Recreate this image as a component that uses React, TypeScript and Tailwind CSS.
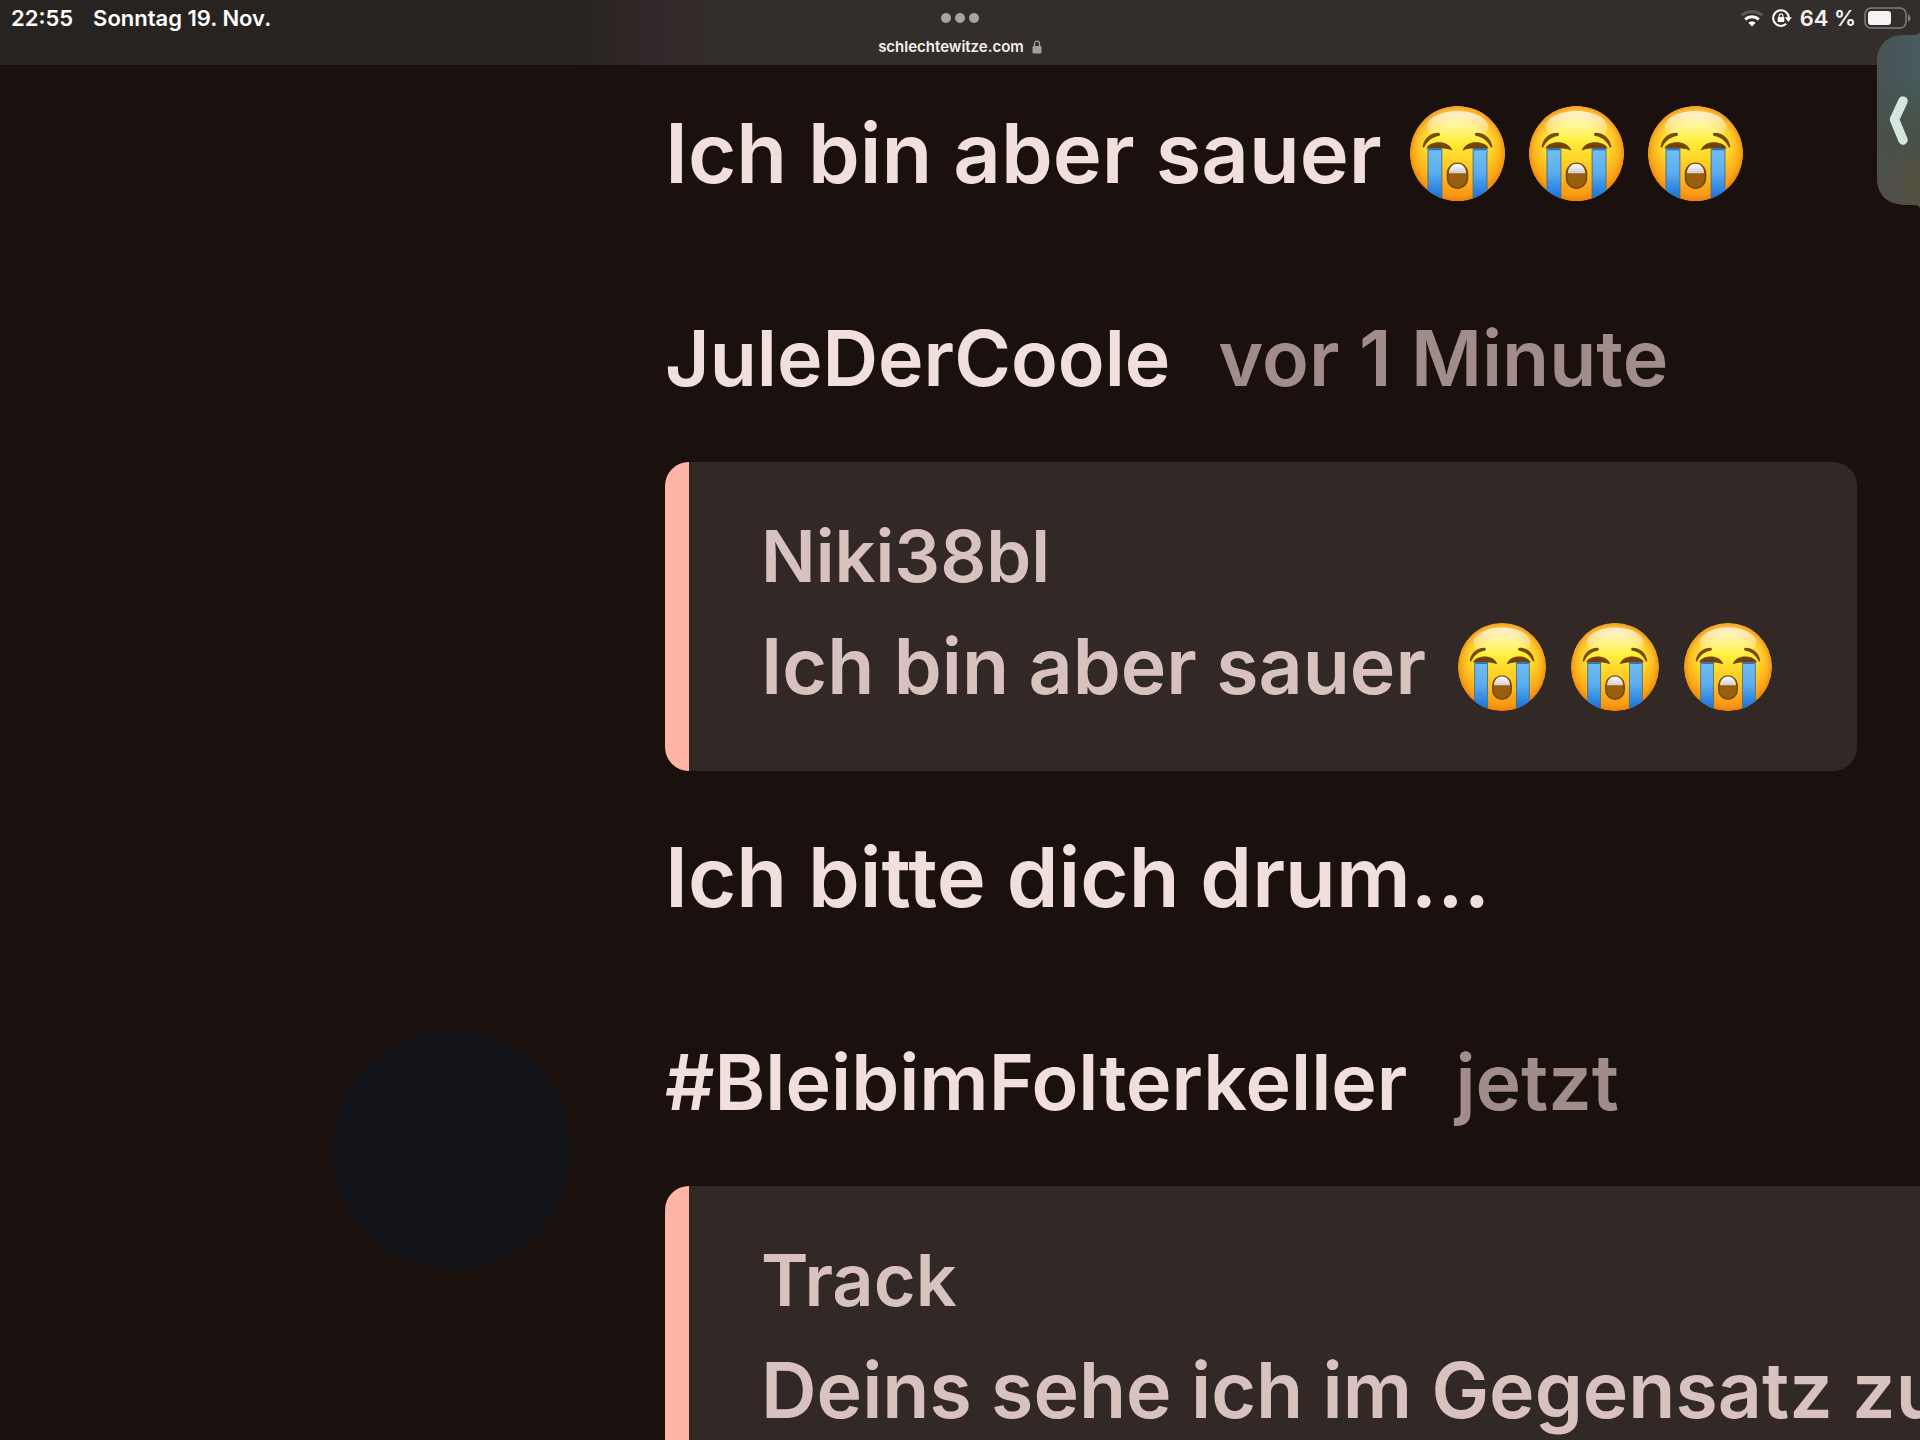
import React from "react";

function CryingFace({ className }: { className: string }) {
  const id = React.useId();
  const face = `${id}-face`;
  const rim = `${id}-rim`;
  const shine = `${id}-shine`;
  const tear = `${id}-tear`;
  const teeth = `${id}-teeth`;
  const clip = `${id}-clip`;
  return (
    <svg viewBox="0 0 96 96" className={className} role="img" aria-label="laut weinendes Gesicht">
      <defs>
        <linearGradient id={face} x1="0" y1="0" x2="0" y2="1">
          <stop offset="0" stopColor="#ffee6a" />
          <stop offset="0.35" stopColor="#fff03a" />
          <stop offset="0.6" stopColor="#ffcf26" />
          <stop offset="1" stopColor="#f9981a" />
        </linearGradient>
        <radialGradient id={rim} cx="0.5" cy="0.49" r="0.52">
          <stop offset="0.6" stopColor="#f9930f" stopOpacity="0" />
          <stop offset="0.86" stopColor="#f9930f" stopOpacity="0.55" />
          <stop offset="1" stopColor="#e87c08" />
        </radialGradient>
        <linearGradient id={shine} x1="0" y1="0" x2="0" y2="1">
          <stop offset="0" stopColor="#fff" stopOpacity="0.75" />
          <stop offset="1" stopColor="#fff" stopOpacity="0" />
        </linearGradient>
        <linearGradient id={tear} x1="0" y1="0" x2="0" y2="1">
          <stop offset="0" stopColor="#74bdf3" />
          <stop offset="0.45" stopColor="#5aaef0" />
          <stop offset="1" stopColor="#0d68d6" />
        </linearGradient>
        <linearGradient id={teeth} x1="0" y1="0" x2="0" y2="1">
          <stop offset="0" stopColor="#fff" />
          <stop offset="1" stopColor="#cfcdd2" />
        </linearGradient>
        <clipPath id={clip}>
          <circle cx="48" cy="48" r="48" />
        </clipPath>
      </defs>
      <g clipPath={`url(#${clip})`}>
        <circle cx="48" cy="48" r="48" fill={`url(#${face})`} />
        <circle cx="48" cy="48" r="48" fill={`url(#${rim})`} />
        <ellipse cx="48" cy="21" rx="31" ry="16" fill={`url(#${shine})`} />
        <path d="M18.200 43h14v54h-14z" fill={`url(#${tear})`} stroke="#4f7078" strokeWidth="1" />
        <path d="M63.800 43h14v54h-14z" fill={`url(#${tear})`} stroke="#4f7078" strokeWidth="1" />
        <path d="M16.500 43C20 34.500 39.500 34 42.800 45C36 42.500 25 42 16.500 43z" fill="#754300" />
        <path d="M79.500 43C76 34.500 56.500 34 53.200 45C60 42.500 71 42 79.500 43z" fill="#754300" />
        <path d="M19 43.800h12.500M64.500 43.800h12.500" stroke="#1f76cf" strokeWidth="1.6" fill="none" />
        <path d="M12.800 41C14 33 20 27 29 27C31 27.500 30.800 29.700 29.200 30.200C22 31.500 17.500 35.500 14.500 41.500C14 42.500 12.800 42 12.800 41z" fill="#7a4a02" />
        <path d="M83.200 41C82 33 76 27 67 27C65 27.500 65.200 29.700 66.800 30.200C74 31.500 78.500 35.500 81.500 41.500C82 42.500 83.200 42 83.200 41z" fill="#7a4a02" />
        <rect x="38" y="58" width="20" height="25" rx="10" fill="#98600c" stroke="#7d4a06" strokeWidth="1.8" />
        <path d="M39.300 68C39.300 55 56.700 55 56.700 68z" fill={`url(#${teeth})`} />
      </g>
    </svg>
  );
}

function Tears({ small }: { small?: boolean }) {
  return (
    <span className={small ? "flex gap-[25px] pl-1" : "flex gap-6"}>
      {[0, 1, 2].map((n) => (
        <CryingFace key={n} className={small ? "size-[88px]" : "size-[95px]"} />
      ))}
    </span>
  );
}

function Body({ children }: { children: React.ReactNode }) {
  return <div className="flex items-center gap-7 text-[83px] leading-[120px]">{children}</div>;
}

function Quote({ author, children }: { author: string; children: React.ReactNode }) {
  return (
    <blockquote className="mt-[53px] mb-[46px] w-max rounded-3xl border-l-[24px] border-[#ffb4a5] bg-[#322826] py-11 pr-[85px] pl-[72px] text-[#d8c2be]">
      <cite className="block text-[72px] leading-[100px] not-italic">{author}</cite>
      <div className="flex items-center gap-7 text-[77px] leading-[121px]">{children}</div>
    </blockquote>
  );
}

function Comment({
  author,
  time,
  avatar,
  children,
}: {
  author: string;
  time: string;
  avatar: string;
  children: React.ReactNode;
}) {
  return (
    <article className="flex items-start gap-[94px] pl-[333px]">
      <div className={`size-[238px] shrink-0 rounded-full ${avatar}`} />
      <div className="min-w-0">
        <header className="flex gap-12 text-[77px] leading-[102px]">
          <h2>{author}</h2>
          <time className="text-[#a08c89]">{time}</time>
        </header>
        {children}
      </div>
    </article>
  );
}

function StatusBar() {
  return (
    <header className="grid h-[65px] grid-cols-3 items-start bg-[linear-gradient(90deg,#272320_0%,#272320_30%,#32292a_34%,#332e2b_38%,#332e2b_100%)] text-[22px] leading-9 font-semibold text-white">
      <div className="flex gap-5 pl-[11px]">
        <time>22:55</time>
        <span>Sonntag 19. Nov.</span>
      </div>
      <div className="flex flex-col items-center">
        <button type="button" aria-label="Multitasking" className="flex h-9 items-center gap-1">
          <span className="size-[10px] rounded-full bg-[#a9a4a1]" />
          <span className="size-[10px] rounded-full bg-[#a9a4a1]" />
          <span className="size-[10px] rounded-full bg-[#a9a4a1]" />
        </button>
        <a href="#" className="flex items-center gap-2 text-[15px] leading-[21px] font-semibold text-[#f3f0ee]">
          schlechtewitze.com
          <svg viewBox="0 0 10 14" className="h-[14px] w-[10px]" aria-hidden="true">
            <rect x="0.500" y="6" width="9" height="7.500" rx="1.300" fill="#a39da0" />
            <path d="M2.500 7V3.800a2.500 2.700 0 0 1 5 0V7" fill="none" stroke="#a39da0" strokeWidth="1.300" />
          </svg>
        </a>
      </div>
      <div className="flex h-9 items-center justify-end gap-2 pr-2 text-[#f4f2f1]">
        <svg viewBox="0 0 24 18" className="h-[18px] w-6" aria-label="WLAN" role="img">
          <g fill="none" strokeWidth="3">
            <path d="M1.500 6.500a15.500 15.500 0 0 1 21 0" stroke="#5b5653" />
            <path d="M5.200 10.300a10 10 0 0 1 13.600 0" stroke="#fff" />
          </g>
          <path d="M12 17.500l-3.700-3.700a5.300 5.300 0 0 1 7.400 0z" fill="#fff" />
        </svg>
        <svg viewBox="0 0 20 18" className="h-[18px] w-5" aria-label="Ausrichtungssperre" role="img">
          <path d="M16.800 9A7.800 7.800 0 1 0 14.300 14.800" fill="none" stroke="#fff" strokeWidth="2" />
          <path d="M12.800 8.300h7l-3.500 4.700z" fill="#fff" />
          <rect x="5.700" y="8" width="6.600" height="5" rx="0.800" fill="#fff" />
          <path d="M7.200 8.500V6.700a1.850 1.900 0 0 1 3.700 0v1.800" fill="none" stroke="#fff" strokeWidth="1.200" />
        </svg>
        <span>64 %</span>
        <svg viewBox="0 0 48 22" className="h-[22px] w-12" aria-label="Batterie" role="img">
          <rect x="1" y="1" width="41" height="20" rx="6" fill="none" stroke="#827e7c" strokeWidth="1.500" />
          <rect x="4" y="4" width="23" height="14" rx="3" fill="#f5f3f3" />
          <path d="M44 7.500c3.300 1 3.300 6 0 7z" fill="#827e7c" />
        </svg>
      </div>
    </header>
  );
}

function SlideOverTab() {
  return (
    <button type="button" aria-label="Seitenleiste einblenden" className="absolute top-8 right-0">
      <svg viewBox="0 0 43 176" className="h-44 w-[43px]" aria-hidden="true">
        <defs>
          <linearGradient id="tab-fill" x1="0" y1="0" x2="0" y2="1">
            <stop offset="0" stopColor="#4a5a60" />
            <stop offset="0.25" stopColor="#465b5f" />
            <stop offset="0.6" stopColor="#475144" />
            <stop offset="0.85" stopColor="#565040" />
            <stop offset="1" stopColor="#54503f" />
          </linearGradient>
          <linearGradient id="tab-edge" x1="0" y1="0" x2="1" y2="0">
            <stop offset="0" stopColor="#4a504e" stopOpacity="0.7" />
            <stop offset="1" stopColor="#4a504e" stopOpacity="0" />
          </linearGradient>
        </defs>
        {["url(#tab-fill)", "url(#tab-edge)"].map((fill) => (
          <path
            key={fill}
            d="M43 0C42 2 40 3 37 3H28C10 3 0 13 0 31V145C0 163 10 172 28 173H37C40 173 42 174 43 176z"
            fill={fill}
          />
        ))}
        <path
          d="M26 69L17.500 87.500L26 108"
          fill="none"
          stroke="#d7e5e0"
          strokeWidth="9.500"
          strokeLinecap="round"
          strokeLinejoin="round"
        />
      </svg>
    </button>
  );
}

export default function App() {
  return (
    <div className="relative h-screen overflow-hidden bg-[#1a110f] font-['Inter',sans-serif]">
      <StatusBar />
      <main className="flex flex-col gap-[94px] pt-7 font-semibold whitespace-nowrap text-[#f1dfdc]">
        <div className="pl-[665px]">
          <Body>
            Ich bin aber sauer <Tears />
          </Body>
        </div>
        <Comment author="JuleDerCoole" time="vor 1 Minute" avatar="bg-[#1b1210]">
          <Quote author="Niki38bl">
            Ich bin aber sauer <Tears small />
          </Quote>
          <Body>Ich bitte dich drum…</Body>
        </Comment>
        <Comment author="#BleibimFolterkeller" time="jetzt" avatar="bg-[#111318]">
          <Quote author="Track">Deins sehe ich im Gegensatz zu</Quote>
        </Comment>
      </main>
      <SlideOverTab />
    </div>
  );
}
